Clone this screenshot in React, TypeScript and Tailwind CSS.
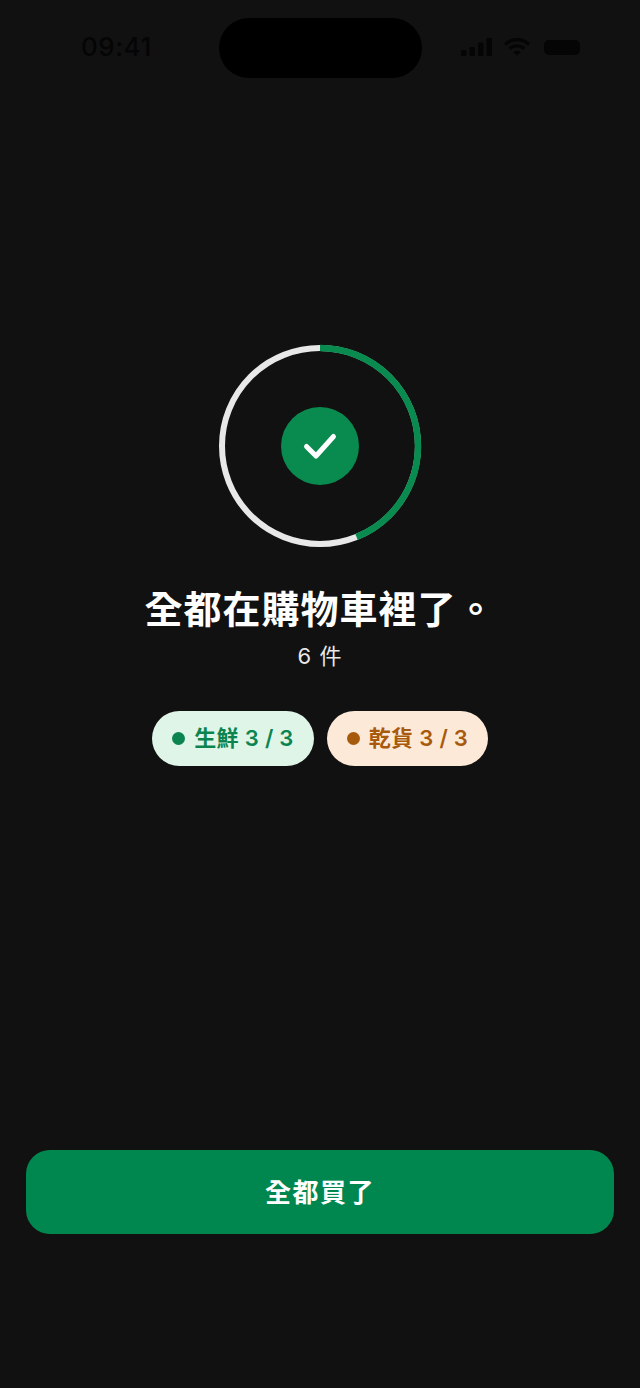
export default function App() {
  const font = "font-['Inter','Noto_Sans_CJK_TC',sans-serif]";
  return (
    <div className={`flex h-[1388px] w-[640px] flex-col overflow-hidden bg-[#111111] ${font}`}>
      <header className="mt-[18px] grid h-[60px] grid-cols-[1fr_203px_1fr] items-center">
        <span className="ml-[81px] mt-[-2px] text-[26px] font-medium leading-none tracking-[0.5px] text-[#050505]">09:41</span>
        <div className="h-[60px] rounded-[30px] bg-black" />
        <div className="mt-[-2px] flex items-center justify-end gap-[9px] pr-[60px]">
          <svg className="ml-[-2px]" width="34" height="20" viewBox="0 0 34 20" fill="#050505">
            <rect x="1" y="13" width="5.5" height="6" rx="1.2" />
            <rect x="9.5" y="10" width="5.5" height="9" rx="1.2" />
            <rect x="18" y="5.5" width="5.500" height="13.5" rx="1.2" />
            <rect x="26.5" y="1" width="5.5" height="18" rx="1.2" />
          </svg>
          <svg width="28" height="20" viewBox="0 0 28 20" fill="none" stroke="#050505" strokeWidth="3.2">
            <path d="M2 7.5C9 1 19 1 26 7.5" />
            <path d="M6.5 11.5C11 8 17 8 21.5 11.5" />
            <path d="M14 18.5l-3.6-3.6c2-1.6 5.2-1.6 7.2 0z" fill="#050505" stroke="none" />
          </svg>
          <div className="ml-[4px] h-[15px] w-[36px] rounded-[5px] bg-[#050505]" />
        </div>
      </header>

      <main className="mt-[266px] flex flex-col items-center">
        <div className="relative flex h-[204px] w-[204px] items-center justify-center">
          <svg className="absolute inset-0" width="204" height="204" viewBox="0 0 204 204" fill="none">
            <circle cx="102" cy="102" r="98" stroke="#e8e8e8" strokeWidth="6" />
            <circle
              cx="102"
              cy="102"
              r="98"
              stroke="#098b50"
              strokeWidth="6.5"
              strokeDasharray="270 616"
              transform="rotate(-90 102 102)"
            />
          </svg>
          <div className="flex h-[78px] w-[78px] items-center justify-center rounded-full bg-[#098b50]">
            <svg width="36" height="30" viewBox="0 0 36 30" fill="none" stroke="white" strokeWidth="5" strokeLinecap="round" strokeLinejoin="round">
              <path d="M4.500 15.500l9.500 9.500L31.500 5.500" />
            </svg>
          </div>
        </div>

        <h1 className="mt-[32px] text-[38px] font-semibold leading-[58px] tracking-[1px] text-white">全都在購物車裡了。</h1>
        <p className="mt-[2px] text-[22px] leading-[32px] tracking-[1px] text-[#e8e8e8]">6 件</p>

        <div className="mt-[39px] flex gap-[13px]">
          <div className="flex h-[55px] w-[162px] items-center justify-center gap-[9px] rounded-[28px] bg-[#dff5e8] text-[22px] font-semibold tracking-[0.3px] text-[#0b8450]">
            <span className="h-[13px] w-[13px] rounded-full bg-[#0b8450]" />
            <span>生鮮 3 / 3</span>
          </div>
          <div className="flex h-[55px] w-[161px] items-center justify-center gap-[9px] rounded-[28px] bg-[#fde9d8] text-[22px] font-semibold tracking-[0.3px] text-[#a85a0c]">
            <span className="h-[13px] w-[13px] rounded-full bg-[#a85a0c]" />
            <span>乾貨 3 / 3</span>
          </div>
        </div>
      </main>

      <div className="mb-[154px] mt-auto px-[26px]">
        <button className="flex h-[84px] w-full items-center justify-center rounded-[24px] bg-[#00874f] text-[26px] font-semibold tracking-[1.5px] text-white">
          全都買了
        </button>
      </div>
    </div>
  );
}
